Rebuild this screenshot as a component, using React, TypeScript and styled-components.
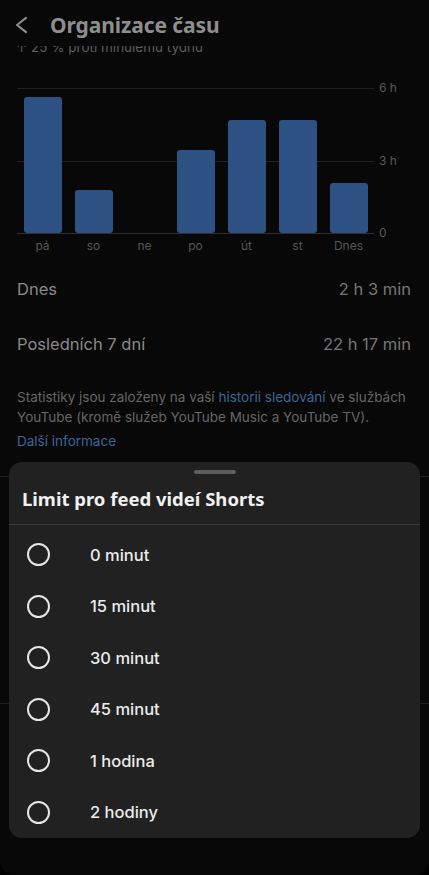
import React from 'react'
import styled, { createGlobalStyle } from 'styled-components'

const GlobalStyle = createGlobalStyle`
    html, body {
        margin: 0;
        padding: 0;
        background: #000;
    }
    * {
        box-sizing: border-box;
    }
`

const days = [
    { label: 'pá', hours: 5.63 },
    { label: 'so', hours: 1.78 },
    { label: 'ne', hours: 0 },
    { label: 'po', hours: 3.43 },
    { label: 'út', hours: 4.68 },
    { label: 'st', hours: 4.68 },
    { label: 'Dnes', hours: 2.07 },
]

const options = ['0 minut', '15 minut', '30 minut', '45 minut', '1 hodina', '2 hodiny']

const MAX_HOURS = 6

const App = () => {
  return (
    <>
      <GlobalStyle />
      <Screen>
        <Page>
          <Header>
            <Back viewBox="0 0 16 20">
              <polyline points="13,2 3,10 13,18" />
            </Back>
            <Title>Organizace času</Title>
          </Header>
          <TrendClip>
            <Trend>↑ 25 % proti minulému týdnu</Trend>
          </TrendClip>

          <Chart>
            <PlotRow>
              <Plot>
                <Gridline $pos={0} />
                <Gridline $pos={50} />
                <Gridline $pos={100} />
                {days.map((d) => (
                  <Column key={d.label}>
                    {d.hours > 0 && (
                      <Bar style={{ height: `${(d.hours / MAX_HOURS) * 100}%` }} />
                    )}
                  </Column>
                ))}
              </Plot>
              <Axis>
                <AxisLabel>6 h</AxisLabel>
                <AxisLabel>3 h</AxisLabel>
                <AxisLabel>0</AxisLabel>
              </Axis>
            </PlotRow>
            <DayRow>
              {days.map((d) => (
                <DayLabel key={d.label}>{d.label}</DayLabel>
              ))}
            </DayRow>
          </Chart>

          <Stats>
            <StatRow>
              <StatName>Dnes</StatName>
              <StatValue>2 h 3 min</StatValue>
            </StatRow>
            <StatRow>
              <StatName>Posledních 7 dní</StatName>
              <StatValue>22 h 17 min</StatValue>
            </StatRow>
          </Stats>

          <Info>
            Statistiky jsou založeny na vaší <Link>historii sledování</Link> ve službách
            YouTube (kromě služeb YouTube Music a YouTube TV).
          </Info>
          <MoreLink>Další informace</MoreLink>

          <Section />
        </Page>

        <Sheet>
          <Handle />
          <SheetTitle>Limit pro feed videí Shorts</SheetTitle>
          <OptionList>
            {options.map((o) => (
              <Option key={o}>
                <Radio />
                <OptionLabel>{o}</OptionLabel>
              </Option>
            ))}
          </OptionList>
        </Sheet>
      </Screen>
    </>
  )
}

export default App

const Screen = styled.div`
    position: relative;
    width: 429px;
    height: 875px;
    overflow: hidden;
    background-color: #080808;
    border-bottom-left-radius: 14px;
    border-bottom-right-radius: 14px;
    font-family: Inter, "Noto Sans", sans-serif;
`
const Page = styled.div`
    display: flex;
    flex-direction: column;
`
const Header = styled.div`
    height: 46px;
    display: flex;
    align-items: center;
    padding-left: 14px;
    padding-top: 4px;
    gap: 21px;
`
const Back = styled.svg`
    width: 15px;
    height: 18px;
    fill: none;
    stroke: #8c8c8c;
    stroke-width: 2.4;
    stroke-linecap: round;
    stroke-linejoin: round;
`
const Title = styled.h1`
    margin: 0;
    font-family: "Noto Sans", sans-serif;
    font-size: 21px;
    font-weight: 700;
    color: #8e8e8e;
    letter-spacing: -0.1px;
`
const TrendClip = styled.div`
    height: 10px;
    overflow: hidden;
    padding-left: 16px;
`
const Trend = styled.div`
    margin-top: -7px;
    font-size: 13.5px;
    line-height: 16px;
    color: #5c5c5c;
`
const Chart = styled.div`
    margin-top: 32px;
    padding-left: 17px;
    display: flex;
    flex-direction: column;
`
const PlotRow = styled.div`
    display: flex;
`
const Plot = styled.div`
    position: relative;
    width: 357px;
    height: 145px;
    display: flex;
    align-items: flex-end;
`
const Gridline = styled.div<{ $pos: number }>`
    position: absolute;
    left: 0;
    right: 0;
    top: ${(p) => p.$pos}%;
    height: 1px;
    background-color: ${(p) => (p.$pos === 100 ? '#2e2e2e' : '#222')};
`
const Column = styled.div`
    position: relative;
    flex: 1;
    height: 100%;
    display: flex;
    justify-content: center;
    align-items: flex-end;
`
const Bar = styled.div`
    width: 38px;
    background-color: #2d5182;
    border-radius: 3px;
`
const Axis = styled.div`
    width: 40px;
    margin-top: -8px;
    margin-bottom: -8px;
    display: flex;
    flex-direction: column;
    justify-content: space-between;
    padding-left: 5px;
`
const AxisLabel = styled.span`
    font-size: 12px;
    line-height: 16px;
    color: #585858;
`
const DayRow = styled.div`
    width: 357px;
    display: flex;
    margin-top: 5px;
`
const DayLabel = styled.span`
    flex: 1;
    text-align: center;
    font-size: 12px;
    line-height: 16px;
    color: #555;
`
const Stats = styled.div`
    margin-top: 7px;
    display: flex;
    flex-direction: column;
`
const StatRow = styled.div`
    height: 55px;
    display: flex;
    justify-content: space-between;
    align-items: center;
    padding: 0 18px 0 17px;
`
const StatName = styled.span`
    font-size: 16.5px;
    color: #8a8a8a;
`
const StatValue = styled.span`
    font-size: 16.5px;
    color: #767676;
`
const Info = styled.p`
    margin: 16px 0 0;
    padding: 0 17px;
    font-size: 13.5px;
    line-height: 20px;
    color: #666;
`
const Link = styled.span`
    color: #3e6496;
`
const MoreLink = styled.div`
    margin-top: 4px;
    padding: 0 17px;
    font-size: 13.5px;
    line-height: 20px;
    color: #3e6496;
`
const Section = styled.div`
    margin-top: 25px;
    height: 228px;
    border-top: 1px solid #1e1e1e;
    border-bottom: 1px solid #1e1e1e;
`
const Sheet = styled.div`
    position: absolute;
    left: 9px;
    right: 9px;
    bottom: 37px;
    height: 376px;
    background-color: #212121;
    border-radius: 13px;
    display: flex;
    flex-direction: column;
    align-items: stretch;
`
const Handle = styled.div`
    align-self: center;
    margin-top: 8px;
    width: 42px;
    height: 4px;
    border-radius: 2px;
    background-color: #5e5e5e;
`
const SheetTitle = styled.h2`
    margin: 0;
    height: 51px;
    display: flex;
    align-items: center;
    padding-left: 13px;
    padding-bottom: 1px;
    font-family: "Noto Sans", sans-serif;
    font-size: 18.5px;
    font-weight: 700;
    color: #f1f1f1;
    border-bottom: 1px solid #3a3a3a;
`
const OptionList = styled.div`
    padding-top: 4.5px;
    display: flex;
    flex-direction: column;
`
const Option = styled.div`
    height: 51.5px;
    display: flex;
    align-items: center;
    padding-left: 18px;
`
const Radio = styled.span`
    width: 23px;
    height: 23px;
    border-radius: 50%;
    border: 2px solid #e6e6e6;
`
const OptionLabel = styled.span`
    margin-left: 40px;
    font-size: 16.5px;
    font-weight: 500;
    color: #ececec;
`
